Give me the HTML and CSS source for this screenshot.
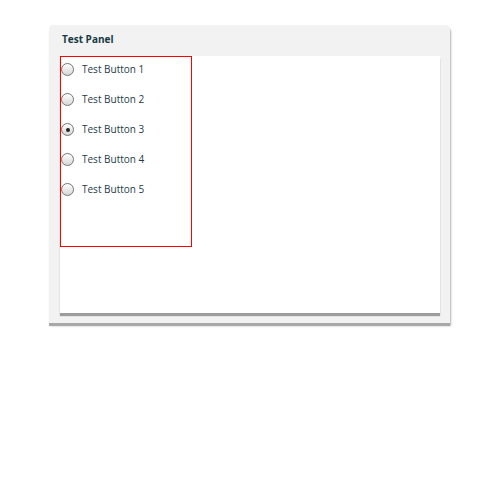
FILE: index.html
```html
<!DOCTYPE html>
<html>
<head>
<meta charset="utf-8">
<link rel="stylesheet" href="styles.css">
</head>
<body>
<div class="page">
  <div class="panel">
    <div class="panel-header">Test Panel</div>
    <div class="panel-body">
      <div class="group">
        <div class="option"><span class="radio"></span><span class="label">Test Button 1</span></div>
        <div class="option"><span class="radio"></span><span class="label">Test Button 2</span></div>
        <div class="option"><span class="radio checked"></span><span class="label">Test Button 3</span></div>
        <div class="option"><span class="radio"></span><span class="label">Test Button 4</span></div>
        <div class="option"><span class="radio"></span><span class="label">Test Button 5</span></div>
      </div>
    </div>
  </div>
</div>
</body>
</html>
```
FILE: styles.css
```css
html, body {
  margin: 0;
  padding: 0;
  background: #ffffff;
}
body {
  font-family: "Open Sans", "DejaVu Sans", sans-serif;
}
.page {
  padding: 25px 0 0 49px;
  height: 500px;
  box-sizing: border-box;
}
.panel {
  width: 401px;
  height: 298px;
  box-sizing: border-box;
  background: #f2f2f2;
  border-radius: 4px 4px 0 0;
  box-shadow: 0 3px 0 #a8a8a8, 1px 3px 2px rgba(0, 0, 0, 0.3);
  display: flex;
  flex-direction: column;
}
.panel-header {
  height: 31px;
  box-sizing: border-box;
  padding: 7px 0 0 13px;
  font-size: 10px;
  font-weight: 700;
  color: #173a42;
}
.panel-body {
  margin: 0 10px 0 11px;
  height: 257px;
  background: #ffffff;
  box-shadow: 0 3px 1px rgba(0, 0, 0, 0.35);
}
.group {
  width: 132px;
  height: 191px;
  box-sizing: border-box;
  border: 1px solid #ff0000;
  padding-top: 1px;
}
.option {
  height: 30px;
  display: flex;
  align-items: center;
  box-sizing: border-box;
  padding-bottom: 7px;
}
.radio {
  width: 13px;
  height: 13px;
  box-sizing: border-box;
  border-radius: 50%;
  border: 1px solid #767676;
  background: linear-gradient(#ffffff, #d6d6d6);
  display: flex;
  align-items: center;
  justify-content: center;
  flex: none;
}
.radio.checked::after {
  content: "";
  width: 4px;
  height: 4px;
  border-radius: 50%;
  background: #222222;
}
.label {
  margin-left: 8px;
  margin-bottom: 2px;
  font-size: 10px;
  color: #1d3c45;
}
```
